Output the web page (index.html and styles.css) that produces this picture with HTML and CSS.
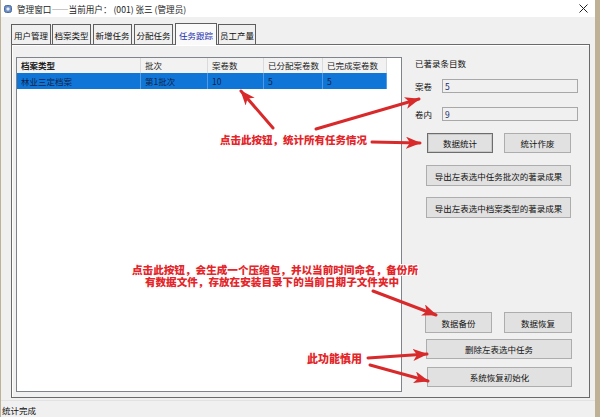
FILE: index.html
```html
<!DOCTYPE html>
<html lang="zh">
<head>
<meta charset="utf-8">
<title>管理窗口</title>
<link rel="stylesheet" href="styles.css">
</head>
<body>
<div class="window">
  <div class="titlebar">
    <svg class="appicon" width="8" height="8" viewBox="0 0 8 8"><rect x="0.5" y="0.5" width="7" height="7" rx="2" fill="#6f8fc2" stroke="#4a6aa0"/><rect x="2.5" y="2.5" width="3" height="3" rx="1" fill="#e8eef8"/></svg>
    <span class="title">管理窗口——当前用户： (001) 张三 (管理员)</span>
    <svg class="close" width="9" height="9" viewBox="0 0 9 9"><path d="M0.5 0.5 L8.5 8.5 M8.5 0.5 L0.5 8.5" stroke="#222" stroke-width="1"/></svg>
  </div>
  <div class="tabstrip">
    <div class="tab w40">用户管理</div>
    <div class="tab w39">档案类型</div>
    <div class="tab w39">新增任务</div>
    <div class="tab w39">分配任务</div>
    <div class="tab sel">任务跟踪</div>
    <div class="tab w37">员工产量</div>
  </div>
  <div class="panel">
    <div class="listview">
      <div class="lv-head">
        <div class="hc bold">档案类型</div>
        <div class="hc">批次</div>
        <div class="hc">案卷数</div>
        <div class="hc">已分配案卷数</div>
        <div class="hc">已完成案卷数</div>
      </div>
      <div class="lv-row">
        <div class="rcell">林业三定档案</div>
        <div class="rcell">第1批次</div>
        <div class="rcell">10</div>
        <div class="rcell">5</div>
        <div class="rcell">5</div>
      </div>
    </div>
    <div class="rcol">
      <div class="rc-title">已著录条目数</div>
      <div class="field f1"><span class="flabel">案卷</span><div class="tb">5</div></div>
      <div class="field f2"><span class="flabel">卷内</span><div class="tb">9</div></div>
      <div class="brow r1">
        <div class="btn def b-stat">数据统计</div>
        <div class="btn b-void">统计作废</div>
      </div>
      <div class="btn exp e1">导出左表选中任务批次的著录成果</div>
      <div class="btn exp e2">导出左表选中档案类型的著录成果</div>
      <div class="brow r2">
        <div class="btn b-back">数据备份</div>
        <div class="btn b-rest">数据恢复</div>
      </div>
      <div class="btn b-del">删除左表选中任务</div>
      <div class="btn b-sys">系统恢复初始化</div>
    </div>
  </div>
  <div class="statusbar">统计完成</div>
</div>

<svg class="arrows" width="600" height="417" viewBox="0 0 600 417">
  <defs>
    <marker id="ah" markerUnits="userSpaceOnUse" markerWidth="15" markerHeight="12" viewBox="0 0 15 12" refX="14" refY="6" orient="auto">
      <path d="M0,0 L15,6 L0,12 L4,6 z" fill="#d8292b"/>
    </marker>
  </defs>
  <g stroke="#d8292b" stroke-width="3" stroke-linecap="round" fill="none">
    <line x1="273" y1="128" x2="241" y2="91" marker-end="url(#ah)"/>
    <line x1="316" y1="129" x2="419" y2="99" marker-end="url(#ah)"/>
    <line x1="372" y1="142" x2="420" y2="143" marker-end="url(#ah)"/>
    <line x1="373" y1="291" x2="436" y2="315" marker-end="url(#ah)"/>
    <line x1="368" y1="358" x2="427" y2="354" marker-end="url(#ah)"/>
    <line x1="370" y1="365" x2="428" y2="381" marker-end="url(#ah)"/>
  </g>
</svg>
<div class="note na">点击此按钮，统计所有任务情况</div>
<div class="note nb"><div>点击此按钮，会生成一个压缩包，并以当前时间命名，备份所</div><div>有数据文件，存放在安装目录下的当前日期子文件夹中</div></div>
<div class="note nc">此功能慎用</div>
</body>
</html>
```
FILE: styles.css
```css
html, body {
  margin: 0;
  padding: 0;
}
body {
  width: 600px;
  height: 417px;
  overflow: hidden;
  position: relative;
  background: #bfb196;
  font-family: "Noto Sans CJK SC", "Noto Sans", sans-serif;
  font-size: 8.5px;
  color: #111;
}
.window {
  margin-left: 1px;
  width: 594px;
  height: 417px;
  background: #f0f0f0;
  display: flex;
  flex-direction: column;
}
.titlebar {
  height: 17px;
  background: #ffffff;
  display: flex;
  align-items: center;
  flex-shrink: 0;
}
.appicon {
  margin-left: 3px;
}
.title {
  margin-left: 5px;
  color: #222;
  font-size: 8.6px;
}
.close {
  margin-left: auto;
  margin-right: 7px;
}
.tabstrip {
  height: 27px;
  box-sizing: border-box;
  padding-left: 10px;
  display: flex;
  align-items: flex-end;
  flex-shrink: 0;
}
.tab {
  height: 20px;
  box-sizing: border-box;
  border: 1px solid #5e5e5e;
  border-bottom: none;
  background: #f0f0f0;
  display: flex;
  align-items: center;
  justify-content: center;
  margin-right: 1px;
  white-space: nowrap;
  color: #111;
}
.w40 { width: 40px; }
.w39 { width: 39px; margin-right: 2px; }
.w37 { width: 38px; }
.tab.sel {
  width: 42px;
  height: 22px;
  margin-bottom: -1px;
  background: #fafafa;
  color: #1c2fb0;
  position: relative;
  z-index: 1;
  margin-right: 1px;
}
.panel {
  margin-left: 10px;
  width: 579px;
  height: 354px;
  box-sizing: border-box;
  border: 1px solid #6a6a6a;
  box-shadow: inset 1px 1px 0 #ffffff;
  display: flex;
  flex-shrink: 0;
}
.listview {
  margin: 12px 0 0 4px;
  width: 386px;
  height: 335px;
  box-sizing: border-box;
  border: 1px solid #7f838a;
  background: #ffffff;
  flex-shrink: 0;
}
.lv-head, .lv-row {
  display: grid;
  grid-template-columns: 124px 67px 56px 59px 64px;
  width: 370px;
}
.lv-head {
  height: 15px;
  background: #f2f2f2;
}
.hc {
  padding-left: 4px;
  line-height: 15px;
  border-right: 1px solid #dadada;
  white-space: nowrap;
  color: #222;
}
.hc.bold {
  font-weight: 700;
}
.lv-row {
  height: 16px;
  background: #0f76d8;
}
.rcell {
  padding-left: 4px;
  line-height: 16px;
  border-right: 1px solid #4f9be4;
  color: #0e1f4a;
  white-space: nowrap;
}
.rcol {
  flex: 1;
  display: flex;
  flex-direction: column;
}
.rc-title {
  margin: 12px 0 0 13px;
  height: 12px;
  line-height: 12px;
}
.field {
  display: flex;
  align-items: center;
  margin-left: 13px;
  height: 14px;
}
.f1 { margin-top: 10px; }
.f2 { margin-top: 14px; }
.flabel {
  width: 27px;
}
.tb {
  width: 136px;
  height: 14px;
  box-sizing: border-box;
  border: 1px solid #a8a8a8;
  background: #f0f0f0;
  padding-left: 2px;
  line-height: 12px;
  color: #1a2a6a;
}
.brow {
  display: flex;
}
.btn {
  box-sizing: border-box;
  border: 1px solid #adadad;
  background: #e1e1e1;
  display: flex;
  align-items: center;
  justify-content: center;
  white-space: nowrap;
  color: #111;
}
.btn.def {
  border: 1px solid #6d6d6d;
  box-shadow: inset 0 0 0 1px #c8c8c8;
}
.r1 {
  margin-top: 12px;
  height: 20px;
}
.b-stat { margin-left: 25px; width: 66px; }
.b-void { margin-left: 11px; width: 67px; }
.exp {
  margin-left: 24px;
  width: 145px;
  height: 21px;
}
.e1 { margin-top: 12px; }
.e2 { margin-top: 11px; }
.r2 {
  margin-top: 94px;
  height: 21px;
}
.b-back { margin-left: 23px; width: 67px; }
.b-rest { margin-left: 12px; width: 68px; }
.b-del {
  margin-top: 6px;
  margin-left: 24px;
  width: 146px;
  height: 20px;
}
.b-sys {
  margin-top: 8px;
  margin-left: 25px;
  width: 145px;
  height: 20px;
}
.statusbar {
  flex: 1;
  border-top: 1px solid #e2e2e2;
  margin-top: 2px;
  padding-left: 1px;
  padding-top: 3px;
  line-height: 12px;
  color: #111;
}
.arrows {
  position: absolute;
  left: 0;
  top: 0;
  pointer-events: none;
}
.note {
  position: absolute;
  color: #e2262a;
  font-weight: 900;
  white-space: nowrap;
  text-shadow:
    1px 0 #fff, -1px 0 #fff, 0 1px #fff, 0 -1px #fff,
    1px 1px #fff, -1px -1px #fff, 1px -1px #fff, -1px 1px #fff,
    0 0 2px rgba(0,0,0,0.35);
}
.na {
  left: 220px;
  top: 133px;
  font-size: 10.5px;
  line-height: 14px;
}
.nb {
  left: 132px;
  top: 264px;
  width: 280px;
  text-align: center;
  font-size: 10.6px;
  line-height: 12px;
}
.nc {
  left: 307px;
  top: 351px;
  font-size: 11px;
  line-height: 14px;
}
```
